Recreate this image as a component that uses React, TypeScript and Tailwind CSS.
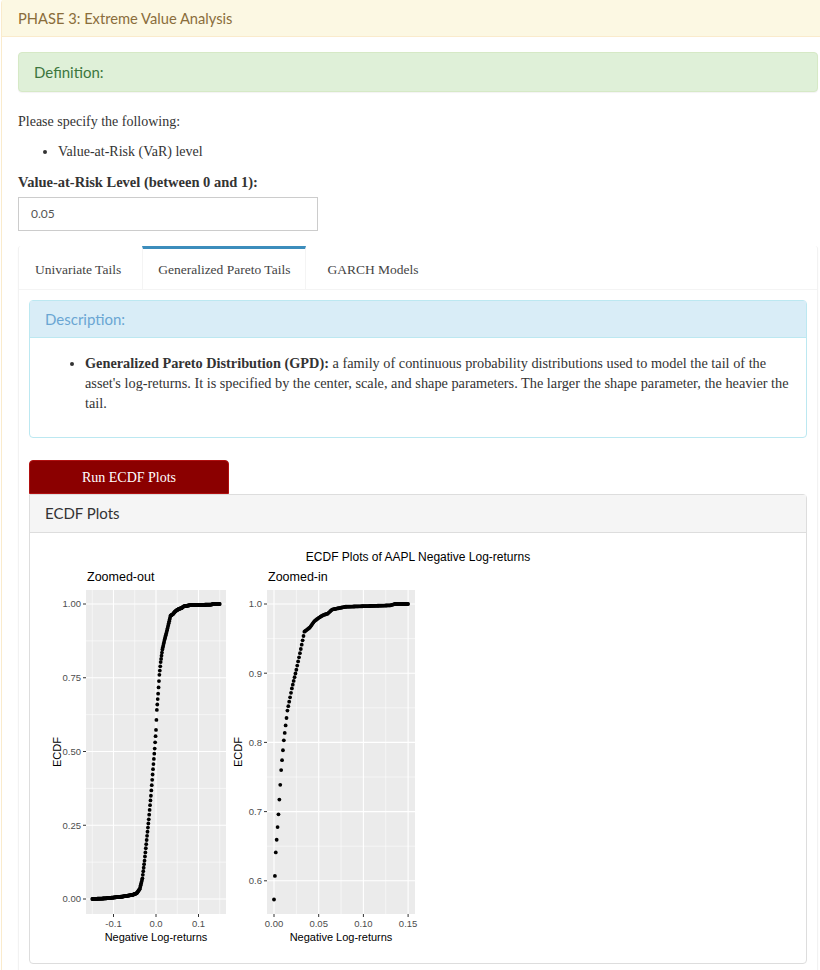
import React from 'react';

const serif = "font-['Liberation_Serif',serif]";
const sans = "font-['Lato',sans-serif]";

// piecewise ECDF shape of the AAPL negative log-returns
const knots: [number, number][] = [
  [-0.15, 0.0],
  [-0.12, 0.002],
  [-0.08, 0.008],
  [-0.055, 0.014],
  [-0.045, 0.02],
  [-0.038, 0.035],
  [-0.032, 0.07],
  [-0.027, 0.13],
  [-0.022, 0.2],
  [-0.017, 0.27],
  [-0.012, 0.35],
  [-0.007, 0.44],
  [-0.003, 0.51],
  [0.0, 0.573],
  [0.002, 0.641],
  [0.005, 0.696],
  [0.008, 0.76],
  [0.011, 0.803],
  [0.015, 0.846],
  [0.02, 0.878],
  [0.025, 0.905],
  [0.03, 0.935],
  [0.034, 0.96],
  [0.04, 0.966],
  [0.045, 0.975],
  [0.05, 0.98],
  [0.055, 0.984],
  [0.06, 0.986],
  [0.065, 0.992],
  [0.08, 0.996],
  [0.13, 0.998],
  [0.135, 1.0],
  [0.15, 1.0],
];

const cdf = (x: number): number => {
  for (let i = 1; i < knots.length; i++) {
    const [x1, y1] = knots[i];
    const [x0, y0] = knots[i - 1];
    if (x <= x1 + 1e-9) return y0 + ((x - x0) / (x1 - x0)) * (y1 - y0);
  }
  return 1;
};

const points = Array.from({ length: 301 }, (_, i) => {
  const x = -0.15 + i * 0.001;
  return [x, cdf(x)] as [number, number];
});

const TICK = '#333333';
const LABEL = '#4d4d4d';

type Panel = {
  left: number;
  width: number;
  px: (x: number) => number;
  py: (y: number) => number;
  yMajor: [number, string][];
  yMinor: number[];
  xMajor: [number, string][];
  xMinor: number[];
  data: [number, number][];
  title: string;
};

const TOP = 50;
const HEIGHT = 324;

const panels: Panel[] = [
  {
    left: 41,
    width: 140,
    px: (x) => 111 + 425 * x,
    py: (y) => 359 - 295 * y,
    yMajor: [
      [0, '0.00'],
      [0.25, '0.25'],
      [0.5, '0.50'],
      [0.75, '0.75'],
      [1, '1.00'],
    ],
    yMinor: [0.125, 0.375, 0.625, 0.875],
    xMajor: [
      [-0.1, '-0.1'],
      [0, '0.0'],
      [0.1, '0.1'],
    ],
    xMinor: [-0.15, -0.05, 0.05, 0.15],
    data: points,
    title: 'Zoomed-out',
  },
  {
    left: 222,
    width: 148,
    px: (x) => 229 + 894 * x,
    py: (y) => 64 + 692 * (1 - y),
    yMajor: [
      [0.6, '0.6'],
      [0.7, '0.7'],
      [0.8, '0.8'],
      [0.9, '0.9'],
      [1, '1.0'],
    ],
    yMinor: [0.65, 0.75, 0.85, 0.95],
    xMajor: [
      [0, '0.00'],
      [0.05, '0.05'],
      [0.1, '0.10'],
      [0.15, '0.15'],
    ],
    xMinor: [0.025, 0.075, 0.125],
    data: points.filter(([x]) => x > -0.0005),
    title: 'Zoomed-in',
  },
];

const EcdfChart = () => (
  <svg width={748} height={415} className="block" fontFamily="'Liberation Sans', Arial, sans-serif">
    <text x={373} y={21} fontSize={12} textAnchor="middle" fill="#000">
      ECDF Plots of AAPL Negative Log-returns
    </text>
    {panels.map((p) => {
      const bottom = TOP + HEIGHT;
      const right = p.left + p.width;
      return (
        <g key={p.title}>
          <text x={p.left + 1} y={41} fontSize={12.5} fill="#000">
            {p.title}
          </text>
          <rect x={p.left} y={TOP} width={p.width} height={HEIGHT} fill="#ebebeb" />
          {p.yMinor.map((v) => (
            <line key={'ym' + v} x1={p.left} x2={right} y1={p.py(v)} y2={p.py(v)} stroke="#fff" strokeWidth={0.55} />
          ))}
          {p.xMinor.map((v) => (
            <line key={'xm' + v} x1={p.px(v)} x2={p.px(v)} y1={TOP} y2={bottom} stroke="#fff" strokeWidth={0.55} />
          ))}
          {p.yMajor.map(([v]) => (
            <line key={'yM' + v} x1={p.left} x2={right} y1={p.py(v)} y2={p.py(v)} stroke="#fff" strokeWidth={1.1} />
          ))}
          {p.xMajor.map(([v]) => (
            <line key={'xM' + v} x1={p.px(v)} x2={p.px(v)} y1={TOP} y2={bottom} stroke="#fff" strokeWidth={1.1} />
          ))}
          {p.data.map(([x, y], i) => (
            <circle key={i} cx={p.px(x)} cy={p.py(y)} r={1.9} fill="#000" />
          ))}
          {p.yMajor.map(([v, label]) => (
            <g key={'yl' + v}>
              <line x1={p.left - 3} x2={p.left} y1={p.py(v)} y2={p.py(v)} stroke={TICK} strokeWidth={1} />
              <text x={p.left - 5} y={p.py(v) + 3.3} fontSize={9.5} textAnchor="end" fill={LABEL}>
                {label}
              </text>
            </g>
          ))}
          {p.xMajor.map(([v, label]) => (
            <g key={'xl' + v}>
              <line x1={p.px(v)} x2={p.px(v)} y1={bottom} y2={bottom + 3} stroke={TICK} strokeWidth={1} />
              <text x={p.px(v)} y={bottom + 12.5} fontSize={9.5} textAnchor="middle" fill={LABEL}>
                {label}
              </text>
            </g>
          ))}
          <text x={p.left + p.width / 2} y={bottom + 27} fontSize={11} textAnchor="middle" fill="#000">
            Negative Log-returns
          </text>
          <text
            x={0}
            y={0}
            fontSize={11}
            textAnchor="middle"
            fill="#000"
            transform={`translate(${p.left - 25} ${TOP + HEIGHT / 2}) rotate(-90)`}
          >
            ECDF
          </text>
        </g>
      );
    })}
  </svg>
);

const tabs = ['Univariate Tails', 'Generalized Pareto Tails', 'GARCH Models'];

export default function App() {
  return (
    <div className="h-[970px] w-[820px] overflow-hidden bg-white text-[#333]">
      <div className="-mt-px ml-px w-[834px] rounded border border-[#faebcc] bg-white">
        <div className={`flex h-[37px] items-center border-b border-[#faebcc] bg-[#fcf8e3] px-4 text-[14.7px] text-[#8a6d3b] ${sans}`}>
          PHASE 3: Extreme Value Analysis
        </div>
        <div className="px-4 pt-[15px]">
          <div
            className={`flex h-10 items-center rounded border border-[#d6e9c6] bg-[#dff0d8] px-[15px] text-[15px] text-[#3c763d] shadow-[0_1px_1px_rgba(0,0,0,0.05)] ${sans}`}
          >
            Definition:
          </div>
          <div className={`${serif} text-[14px]`}>
            <p className="mt-5 mb-[10px] leading-5">Please specify the following:</p>
            <ul className="mb-[10px] list-disc pl-10 leading-5">
              <li>Value-at-Risk (VaR) level</li>
            </ul>
            <div className="mb-[5px] text-[14.5px] leading-5 font-bold">Value-at-Risk Level (between 0 and 1):</div>
            <div className={`flex h-[34px] w-[300px] items-center border border-[#ccc] px-3 text-[12px] text-[#555] ${sans}`}>
              0.05
            </div>
          </div>

          <div className="mt-[15px] rounded-[3px] border border-[#f2f2f2] border-t-0 bg-white shadow-[0_1px_1px_rgba(0,0,0,0.08)]">
            <div className={`flex gap-[5px] border-b border-[#f4f4f4] text-[13.5px] text-[#444] ${serif}`}>
              {tabs.map((t, i) => (
                <div
                  key={t}
                  className={
                    i === 1
                      ? 'border-x border-t-[3px] border-x-[#f4f4f4] border-t-[#3c8dbc] px-[15px] pt-[11px] pb-[9px] leading-5'
                      : 'border-x border-t-[3px] border-x-transparent border-t-transparent px-[15px] pt-[11px] pb-[9px] leading-5'
                  }
                >
                  {t}
                </div>
              ))}
            </div>
            <div className="p-[10px]">
              <div className="rounded border border-[#bce8f1] bg-white">
                <div className={`flex h-[37px] items-center border-b border-[#bce8f1] bg-[#d9edf7] px-[15px] text-[15px] text-[#6aa6d3] ${sans}`}>
                  Description:
                </div>
                <div className={`px-[15px] pt-[15px] pb-[14px] text-[14.3px] ${serif}`}>
                  <ul className="mb-[10px] list-disc pl-10 leading-5">
                    <li>
                      <b>Generalized Pareto Distribution (GPD):</b> a family of continuous probability distributions
                      used to model the tail of the asset's log-returns. It is specified by the center, scale, and shape
                      parameters. The larger the shape parameter, the heavier the tail.
                    </li>
                  </ul>
                </div>
              </div>

              <div
                className={`mt-[22px] flex h-[34px] w-[200px] items-center justify-center rounded-t border border-[#b01010] bg-[#8b0000] text-[14px] text-white ${serif}`}
              >
                Run ECDF Plots
              </div>
              <div className="rounded-b rounded-tr border border-[#ddd]">
                <div className={`flex h-[38px] items-center border-b border-[#ddd] bg-[#f5f5f5] px-[15px] text-[15px] text-[#333] ${sans}`}>
                  ECDF Plots
                </div>
                <div className="px-[15px] pt-[7px] pb-2">
                  <EcdfChart />
                </div>
              </div>
            </div>
          </div>
        </div>
      </div>
    </div>
  );
}
